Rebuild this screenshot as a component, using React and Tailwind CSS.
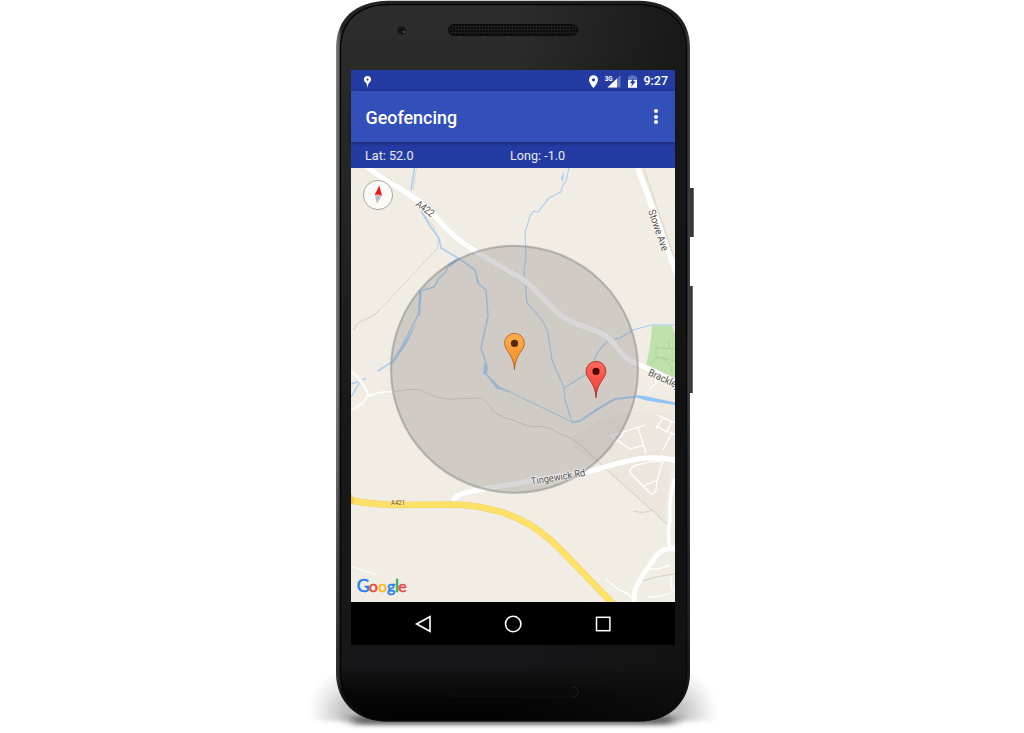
import React from "react";

const water = "#a4cdf4";

const googleLetters = [
  ["G", "#1a82ee", 356.8, 17.5],
  ["o", "#e9473d", 368.8, 16],
  ["o", "#f9bd16", 378, 16],
  ["g", "#1a82ee", 387.1, 16],
  ["l", "#2da94f", 394.9, 17],
  ["e", "#e9473d", 398.3, 16],
];

function Pin({ x, y, from, to, edge, dot, id }) {
  return (
    <g transform={`translate(${x} ${y})`}>
      <defs>
        <linearGradient id={id} x1="0" y1="0" x2="0" y2="1">
          <stop offset="0" stopColor={from} />
          <stop offset="1" stopColor={to} />
        </linearGradient>
      </defs>
      <path
        d="M0 0C-.7-8.5-2.5-12-5.8-17.2C-7.9-20.4-9.9-23-9.9-26.6A9.9 9.9 0 0 1 9.9-26.6C9.9-23 7.9-20.4 5.8-17.2C2.5-12 .7-8.5 0 0Z"
        fill={`url(#${id})`}
        stroke={edge}
        strokeWidth=".8"
        strokeLinejoin="round"
      />
      <circle cx="0" cy="-26.4" r="3.6" fill={dot} />
    </g>
  );
}

function MapView() {
  return (
    <svg className="block h-[434px] w-[324px]" viewBox="351 168 324 434" fill="none" fontFamily="Roboto, sans-serif">
      <rect x="351" y="168" width="324" height="434" fill="#f2ede4" />
      {/* built-up areas */}
      <path d="M573 436L600 420L632 412L675 412V530L667 524L606 470L575 448Z" fill="#ece6df" />
      <path d="M675 455V530L667 524L664 510Q672 480 667 460Z" fill="#f0ebe2" />
      <path d="M638 398L665 396L675 402V413L632 412Z" fill="#efe9e0" />
      <path d="M652 325.500L672 325.500L675 334V380L646 366Q651 345 652 325.500Z" fill="#bfe1ab" />
      <path d="M675 349L656 347.500V357M656 357L675 361M669 340V348M650 366Q656 354 664 359T672 374" stroke="#a8cd96" strokeWidth=".7" />

      {/* boundaries and tracks */}
      <path d="M416.500 168L413 190M421 211L433 226L438 238L438 248L431 255L402 286L375 315" stroke="#d1cbc3" strokeWidth=".7" />
      <path d="M379 310Q374 317 361 321Q355 324 354 330" stroke="#d1cbc3" strokeWidth=".9" />
      <path d="M394 392Q410 388 421 390Q438 400 454 399L482 398Q488 402 494 412Q503 418 515 421Q525 426 535 427Q546 424 560 434Q570 436 582 446L607 470L667 524" stroke="#d0cac2" strokeWidth=".9" />
      <path d="M643.500 168L674 257" stroke="#dccab4" strokeWidth=".8" />
      <path d="M633 511Q645 514 652 510M643 581Q656 576 675 574" stroke="#c9c3bb" strokeWidth=".7" />
      <path d="M352 567L377 575" stroke="#fff" strokeWidth="1" />

      {/* rivers */}
      <path d="M414.500 168L411 190M421 211L430 226L439 238L441 248L459 258.500L475 270L478 283L486 290L488 316L481 348L487 367L486 374L500 388L510 392" stroke={water} strokeWidth="1.500" />
      <path d="M510 392L572 422" stroke={water} strokeWidth="1" />
      <path d="M459 258L449 264L445 273L439 278L434 287L420 291L419 313L400 350L392 362L378 371" stroke={water} strokeWidth="1.500" />
      <path d="M459 257L449 264L449.500 267L459 260ZM419 291L422 291L420 316L418 316ZM418 321L405 342L393 361L390 365L395 361L407 343ZM475 270L479 283L477 283ZM484 363L487.500 368L487 375L483 374ZM486 375L500 388L509 391L497 389Z" fill={water} />
      <path d="M569 168L566 181L562 187L561 192L549 198L538 212L534 211L530 216L525 232L526 258L524 270L527 303L537 314Q546 324 548 334L552 360L564 388L565 400L572 422" stroke={water} strokeWidth="1.100" />
      <path d="M564 388L588 373M594 360Q598 350 609 340L620 338L633 330L651 325H675" stroke={water} strokeWidth="1.100" />
      <path d="M564.500 171L561 178L562.500 182Z" fill={water} />
      <path d="M572 422.500L580 421Q600 407 615 399L637 396.500" stroke={water} strokeWidth="2.100" />
      <path d="M637 395L647 396.500L675 402.500V405L646 400.500L637 397.500Z" fill="#91c3f6" />
      <path d="M351 384L361 381L366 378M351 397L360 382" stroke={water} strokeWidth="1.400" />

      {/* roads */}
      <g stroke="#e8e2d8" strokeLinejoin="round">
        <path d="M367 167L388 182Q405 191 414 198Q424 204 435 216Q450 234 462 242L478 253L512 273Q525 279 535 290Q549 304 558 313Q568 321 582 326Q600 331 610 339L623 355Q628 360 638 364L677 383" strokeWidth="6.600" />
        <path d="M351 371Q365 383 368 395Q366 402 351 411" strokeWidth="4.500" />
      </g>
      <g stroke="#fff" strokeLinejoin="round" strokeLinecap="round">
        <path d="M367 167L388 182Q405 191 414 198Q424 204 435 216Q450 234 462 242L478 253L512 273Q525 279 535 290Q549 304 558 313Q568 321 582 326Q600 331 610 339L623 355Q628 360 638 364L677 383" strokeWidth="5.600" />
        <path d="M637 166L677 275" strokeWidth="5.300" />
        <path d="M454 503Q452 497 462 494Q475 490 495 487L548 478L592 471Q620 462 641 458.500Q660 456.500 677 460.500" strokeWidth="5.200" />
        <path d="M675 549Q663 547 656 556Q645 571 637 585Q634 590 634 604" strokeWidth="5" />
        <path d="M674 480Q669 498 670 520Q667 535 670 549" strokeWidth="3.500" />
        <path d="M351 371Q365 383 368 395Q366 402 351 411" strokeWidth="3.500" stroke="#fbf8f3" />
        <path d="M369 396Q380 391 394 392" strokeWidth="1.500" />
      </g>
      <g stroke="#fff" strokeWidth="1.300">
        <path d="M611 436L645 425M611 436L630 449L644 445M638 428L646 453M623 434L613 444M657 415L675 423M657 417M663 418L656 429M656 426L667 432M667 432L672 421M667 431L675 435M671 434L663 450M656 377V383L650 389" />
        <path d="M663 462Q656 480 656 490Q654 496 650 493L643 486L630 473Q628 466 642 464Q652 460 663 462M643 486L658 480M605 579Q612 584 619 590Q628 592 632 598M650 569Q660 570 670 565M648 597Q662 597 671 593M671 577V587L675 593" />
      </g>
      <path d="M350 500Q370 504 397 505L454 504.500Q490 505 520 519Q541 529 559 547L618 608" stroke="#efcf62" strokeWidth="6.600" transform="translate(-1 0)" />
      <path d="M350 500Q370 504 397 505L454 504.500Q490 505 520 519Q541 529 559 547L618 608" stroke="#ffe168" strokeWidth="5.600" transform="translate(-1 0)" />
      <path d="M351 494L354 498V503L351 503Z" fill="#f7cf4b" />

      {/* geofence radius */}
      <circle cx="514.500" cy="369.300" r="123.800" fill="#7b7979" fillOpacity=".29" />
      <circle cx="514.500" cy="369.300" r="123.500" stroke="#777" strokeOpacity=".38" strokeWidth="2.300" />

      {/* labels */}
      <g fill="#55504a" stroke="#fff" strokeOpacity=".75" strokeWidth="1.600" paintOrder="stroke" strokeLinejoin="round">
        <text transform="translate(415 205.500) rotate(36)" fontSize="10.300" textLength="20" lengthAdjust="spacingAndGlyphs">A422</text>
        <text transform="translate(648 211) rotate(71)" fontSize="10.500" textLength="43" lengthAdjust="spacingAndGlyphs">Stowe Ave</text>
        <text transform="translate(647.500 375) rotate(25)" fontSize="10.300" textLength="34" lengthAdjust="spacingAndGlyphs">Brackley</text>
        <text transform="translate(531.500 485) rotate(-9.500)" fontSize="10.300" textLength="55" lengthAdjust="spacingAndGlyphs">Tingewick Rd</text>
        <text x="391" y="505.300" fontSize="7.200" textLength="14" lengthAdjust="spacingAndGlyphs" fill="#6c4a20" stroke="#fff2b0" strokeWidth="1">A421</text>
      </g>

      <Pin id="orange-pin" x={514.5} y={369.8} from="#ffad4f" to="#f68b22" edge="#a85c17" dot="#56290c" />
      <Pin id="red-pin" x={596} y={397.8} from="#ff6a5c" to="#f23a33" edge="#a3211d" dot="#4d0805" />

      {/* compass */}
      <circle cx="378" cy="195" r="14.600" fill="#fbfaf7" stroke="#aaa7a3" strokeWidth="1" />
      <path d="M379.300 185.500L382 196L378.300 194.600L374.600 195Z" fill="#f31515" />
      <path d="M375 195.500L378.300 195L381.400 196.300L377 203.800Z" fill="#bdbdbd" />

      <g fontFamily="Lato, sans-serif" strokeLinejoin="round">
        {googleLetters.map(([c, color, x, size]) => (
          <text key={x} x={x} y="592" fontSize={size} fill={color} stroke={color} strokeWidth=".5">{c}</text>
        ))}
      </g>
    </svg>
  );
}

function StatusBar() {
  return (
    <div className="flex h-[21px] items-center bg-[#243ba3] pt-[2px] pr-[7px] pl-[12px] text-white">
      <svg className="h-3 w-[9px]" viewBox="0 0 9 12">
        <path fillRule="evenodd" fill="#fff" d="M4.500 0A3.600 3.600 0 0 0 .9 3.600C.9 5.800 3 6.800 3.700 8L4.500 11.800L5.300 8C6 6.800 8.100 5.800 8.100 3.600A3.600 3.600 0 0 0 4.500 0ZM4.500 2.500A1.100 1.100 0 1 1 4.500 4.700A1.100 1.100 0 0 1 4.500 2.500Z" />
      </svg>
      <svg className="ml-auto h-[13px] w-[50px]" viewBox="588 74.500 50 13">
        <path fillRule="evenodd" fill="#fff" d="M593.500 74.700A4.500 4.500 0 0 0 589 79.200C589 82.500 593.500 87.500 593.500 87.500S598 82.500 598 79.200A4.500 4.500 0 0 0 593.500 74.700ZM593.500 77.700A1.600 1.600 0 1 1 593.500 80.900A1.600 1.600 0 0 1 593.500 77.700Z" />
        <path d="M607.500 87L620.500 74.500V87Z" fill="#fff" fillOpacity=".3" />
        <path d="M607.500 87L617 78V87Z" fill="#fff" />
        <text x="604.700" y="80" fill="#fff" stroke="#243ba3" strokeWidth="1" paintOrder="stroke" fontFamily="Roboto, sans-serif" fontWeight="700" fontSize="8" textLength="8" lengthAdjust="spacingAndGlyphs">3G</text>
        <path d="M628 76H630.500V74.800H634.500V76H637V79.500H628Z" fill="#fff" fillOpacity=".3" />
        <path d="M628 79.500H637V87.300H628Z" fill="#fff" />
        <path d="M634.200 77L629.700 82.800H632L631 86.500L635.700 80.800H633.300Z" fill="#243ba3" />
      </svg>
      <span className="ml-[5px] text-[12.500px] leading-none font-medium">9:27</span>
    </div>
  );
}

export default function App() {
  return (
    <div className="relative h-[733px] w-[1024px] overflow-hidden bg-white font-[Roboto,sans-serif]">
      <svg className="absolute inset-0" width="1024" height="733" fill="none">
        <defs>
          <filter id="contact" x="-10%" y="-100%" width="120%" height="300%">
            <feGaussianBlur stdDeviation="7 2" />
          </filter>
          <filter id="glow" x="-20%" y="-20%" width="140%" height="140%">
            <feGaussianBlur stdDeviation="2" />
          </filter>
          <radialGradient id="glow-left" cx="354" cy="713" r="46" gradientUnits="userSpaceOnUse">
            <stop offset=".2" stopColor="#888" stopOpacity=".55" />
            <stop offset="1" stopColor="#aaa" stopOpacity="0" />
          </radialGradient>
          <radialGradient id="glow-right" cx="672" cy="713" r="46" gradientUnits="userSpaceOnUse">
            <stop offset=".2" stopColor="#888" stopOpacity=".55" />
            <stop offset="1" stopColor="#aaa" stopOpacity="0" />
          </radialGradient>
          <linearGradient id="metal" x1="336" y1="0" x2="690" y2="0" gradientUnits="userSpaceOnUse">
            <stop offset="0" stopColor="#858585" />
            <stop offset=".009" stopColor="#5b5b5b" />
            <stop offset=".015" stopColor="#242424" />
            <stop offset=".985" stopColor="#202020" />
            <stop offset="1" stopColor="#444" />
          </linearGradient>
          <linearGradient id="fade" x1="0" y1="0" x2="0" y2="722" gradientUnits="userSpaceOnUse">
            <stop offset=".55" stopColor="#111" stopOpacity="0" />
            <stop offset="1" stopColor="#080808" stopOpacity=".8" />
          </linearGradient>
          <linearGradient id="face" x1="340" y1="0" x2="340" y2="722" gradientUnits="userSpaceOnUse">
            <stop offset="0" stopColor="#2e2d2e" />
            <stop offset=".3" stopColor="#252425" />
            <stop offset=".6" stopColor="#191819" />
            <stop offset=".92" stopColor="#171619" />
            <stop offset=".965" stopColor="#060606" />
            <stop offset="1" stopColor="#020202" />
          </linearGradient>
          <linearGradient id="right-shade" x1="340" y1="0" x2="687" y2="0" gradientUnits="userSpaceOnUse">
            <stop offset=".5" stopColor="#111" stopOpacity="0" />
            <stop offset=".98" stopColor="#101010" stopOpacity=".7" />
          </linearGradient>
          <pattern id="mesh" width="3" height="3" patternUnits="userSpaceOnUse">
            <rect width="3" height="3" fill="#1c1c1c" />
            <circle cx="1" cy="1" r="1" fill="#050505" />
          </pattern>
        </defs>
        <path d="M300 665H420V721H300Z" fill="url(#glow-left)" filter="url(#glow)" />
        <path d="M606 665H726V721H606Z" fill="url(#glow-right)" filter="url(#glow)" />
        <rect x="352" y="716" width="322" height="9" rx="4" fill="#222" fillOpacity=".65" filter="url(#contact)" />
        <rect x="689" y="188" width="5" height="49" rx="1" fill="#38383a" />
        <rect x="689" y="286" width="4" height="107" rx="1" fill="#38383a" />
        <path d="M693.500 189V236M692.500 287V392" stroke="#6b6b6d" />
        <path d="M388 .8H639C670 1.500 690 18 690 48V672C690 702 669 721.500 640 721.500H386C357 721.500 336 702 336 672V48C336 18 356 1.500 388 .8Z" fill="url(#metal)" />
        <path d="M388 .8H639C670 1.500 690 18 690 48V672C690 702 669 721.500 640 721.500H386C357 721.500 336 702 336 672V48C336 18 356 1.500 388 .8Z" fill="url(#fade)" />
        <path d="M388 4.500H638C668 5 686.500 21 686.500 50V670C686.500 700 667 720 639 720H387C359 720 340.500 700 340.500 670V50C340.500 21 358 5 388 4.500Z" fill="url(#face)" stroke="#050505" strokeWidth="1.400" />
        <path d="M388 4.500H638C668 5 686.500 21 686.500 50V670C686.500 700 667 720 639 720H387C359 720 340.500 700 340.500 670V50C340.500 21 358 5 388 4.500Z" fill="url(#right-shade)" />
        <circle cx="401.500" cy="30.500" r="6.500" fill="#292829" stroke="#363536" strokeWidth=".8" />
        <circle cx="401.700" cy="30.500" r="3.800" fill="#151216" />
        <circle cx="403.700" cy="32" r="1.200" fill="#67434f" />
        <rect x="448.500" y="24.500" width="129" height="11" rx="5.500" fill="url(#mesh)" stroke="#0b0b0b" />
        <rect x="449" y="687" width="129" height="10" rx="5" fill="#0a0a0a" stroke="#131313" strokeWidth=".7" />
        <path d="M573 687.500Q578 687.500 578 692Q578 697 573 697" stroke="#252525" strokeWidth=".8" />
      </svg>

      <main className="relative mt-[70px] ml-[351px] flex h-[575px] w-[324px] flex-col bg-black">
        <StatusBar />
        <header className="relative z-10 flex h-[51px] items-center justify-between bg-[#334fba] pr-[17.500px] pl-[14.500px] text-white shadow-[0_1px_4px_rgba(0,0,0,0.4)]">
          <h1 className="pt-[2px] text-[17.900px] leading-none font-medium">Geofencing</h1>
          <button className="flex flex-col gap-[1.500px]" aria-label="More options">
            <span className="size-[4px] rounded-full bg-white" />
            <span className="size-[4px] rounded-full bg-white" />
            <span className="size-[4px] rounded-full bg-white" />
          </button>
        </header>
        <div className="grid h-[26px] grid-cols-[145px_1fr] items-center bg-[#243ba3] pt-[2px] pl-[14px] text-[12.600px] leading-none text-white/90">
          <span>Lat: 52.0</span>
          <span>Long: -1.0</span>
        </div>
        <MapView />
        <nav className="grid h-[43px] grid-cols-[90px_90px_90px] items-center justify-center justify-items-center bg-black">
          <svg width="18" height="18" viewBox="0 0 18 18" fill="none"><path d="M2.600 9L16 1.700V16.300Z" stroke="#fff" strokeWidth="1.600" /></svg>
          <svg width="18" height="18" viewBox="0 0 18 18" fill="none"><circle cx="9.200" cy="9" r="7.700" stroke="#fff" strokeWidth="1.600" /></svg>
          <svg width="18" height="18" viewBox="0 0 18 18" fill="none"><rect x="2.500" y="2.300" width="13.400" height="13.400" stroke="#fff" strokeWidth="1.500" /></svg>
        </nav>
      </main>
    </div>
  );
}
